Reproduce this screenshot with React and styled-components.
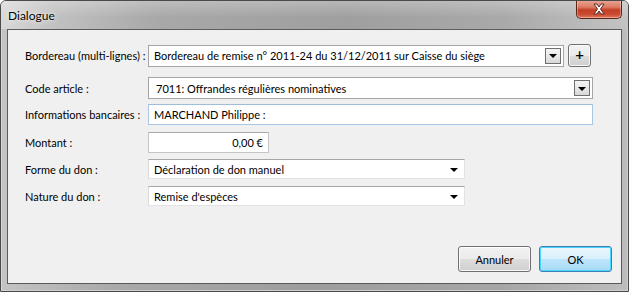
import React from "react";
import styled, { createGlobalStyle, css } from "styled-components";

const GlobalStyle = createGlobalStyle`
  html, body {
    margin: 0;
    padding: 0;
    background: #ffffff;
  }
  body {
    font-family: Lato, "Liberation Sans", sans-serif;
    font-size: 11px;
    color: #000;
  }
`;

const Window = styled.div`
  width: 629px;
  height: 292px;
  box-sizing: border-box;
  display: flex;
  flex-direction: column;
  border: 1px solid #4a4a4a;
  border-radius: 6px 6px 0 0;
  background: linear-gradient(90deg, #c4c4c4 0%, #a9a9a9 18%, #9d9d9d 50%, #a6a6a6 80%, #bdbdbd 100%);
  box-shadow: inset 1px 1px 0 #d8d8d8, inset -1px -1px 0 #cfcfcf;
  overflow: hidden;
`;

const TitleBar = styled.div`
  height: 28px;
  display: flex;
  align-items: flex-start;
  flex-shrink: 0;
  background:
    linear-gradient(180deg, rgba(255, 255, 255, 0.25) 0%, rgba(255, 255, 255, 0) 60%),
    linear-gradient(90deg, #d9d9d9 0%, #c2c2c2 8%, #a8a8a8 25%, #9f9f9f 55%, #a9a9a9 80%, #c3c3c3 100%);
`;

const Title = styled.div`
  flex: 1;
  padding: 7px 0 0 7px;
  font-size: 12px;
  color: #000;
  text-shadow: 0 0 6px rgba(255, 255, 255, 0.9), 0 0 2px rgba(255, 255, 255, 0.8);
`;

const CloseButton = styled.div`
  width: 46px;
  height: 19px;
  margin-right: 6px;
  margin-top: -1px;
  box-sizing: border-box;
  border: 1px solid #5a2418;
  border-top: none;
  border-radius: 0 0 5px 5px;
  display: flex;
  align-items: center;
  justify-content: center;
  background: linear-gradient(180deg, #e9a898 0%, #dc7a62 40%, #c23f26 55%, #c94a32 80%, #e27a5c 100%);
  box-shadow: inset 0 0 0 1px rgba(255, 255, 255, 0.35);
`;

const Client = styled.div`
  flex: 1;
  margin: 0 6px 7px 6px;
  border: 1px solid #5b5b5b;
  background: #f0f0f0;
  display: flex;
  flex-direction: column;
  padding: 14px 9px 11px 17px;
`;

const Row = styled.div`
  display: flex;
  align-items: center;
  height: ${(p) => p.$h}px;
  margin-top: ${(p) => p.$mt || 0}px;
`;

const Label = styled.div`
  width: 123px;
  flex-shrink: 0;
  white-space: nowrap;
  color: #000;
`;

const fieldBase = css`
  box-sizing: border-box;
  height: 100%;
  background: #fff;
  display: flex;
  align-items: center;
  white-space: nowrap;
  overflow: hidden;
`;

const ComboBox = styled.div`
  ${fieldBase}
  width: ${(p) => p.$w}px;
  border: 1px solid #a5a5a5;
  padding: 0 2px 0 ${(p) => p.$pl || 4}px;
`;

const ComboText = styled.div`
  flex: 1;
`;

const DropButton = styled.div`
  width: 16px;
  height: 16px;
  box-sizing: border-box;
  border: 1px solid #6f6f6f;
  background: linear-gradient(180deg, #f4f4f4 0%, #e8e8e8 50%, #d8d8d8 100%);
  display: flex;
  align-items: center;
  justify-content: center;
`;

const Arrow = styled.div`
  width: 0;
  height: 0;
  border-left: 4px solid transparent;
  border-right: 4px solid transparent;
  border-top: 4px solid #000;
  margin-top: 1px;
`;

const FlatCombo = styled.div`
  ${fieldBase}
  width: 317px;
  border-top: 1px solid #a6a6a6;
  border-left: 1px solid #dadada;
  border-right: 1px solid #e2e2e2;
  border-bottom: 1px solid #e2e2e2;
  padding: 0 6px 0 5px;
`;

const TextInput = styled.div`
  ${fieldBase}
  width: ${(p) => p.$w}px;
  border: 1px solid ${(p) => (p.$focus ? "#a9c7e3" : "#c6c6c6")};
  border-top-color: ${(p) => (p.$focus ? "#9fbcd8" : "#a9a9a9")};
  padding: 0 5px;
  justify-content: ${(p) => (p.$right ? "flex-end" : "flex-start")};
`;

const Button = styled.div`
  box-sizing: border-box;
  width: ${(p) => p.$w}px;
  height: ${(p) => p.$h}px;
  border: 1px solid ${(p) => (p.$default ? "#3c7fb1" : "#707070")};
  border-radius: 3px;
  display: flex;
  align-items: center;
  justify-content: center;
  color: #000;
  background: ${(p) =>
    p.$default
      ? "linear-gradient(180deg, #eaf6fd 0%, #d9f0fc 50%, #bee6fd 51%, #a7d9f5 100%)"
      : "linear-gradient(180deg, #f2f2f2 0%, #ebebeb 50%, #dddddd 51%, #cfcfcf 100%)"};
  box-shadow: inset 0 0 0 1px ${(p) => (p.$default ? "#48d5ff" : "rgba(255,255,255,0.8)")};
  margin-left: ${(p) => p.$ml || 0}px;
`;

const PlusButton = styled(Button)`
  font-size: 15px;
  font-weight: 600;
  line-height: 1;
  padding-bottom: 2px;
`;

const ButtonBar = styled.div`
  margin-top: auto;
  display: flex;
  justify-content: flex-end;
  height: 26px;
`;

const CloseIcon = () => (
  <svg width="14" height="12" viewBox="0 0 14 12">
    <path
      d="M2 1 L5 1 L7 4 L9 1 L12 1 L8.5 6 L12 11 L9 11 L7 8 L5 11 L2 11 L5.5 6 Z"
      fill="#ffffff"
      stroke="#5b2a20"
      strokeWidth="1"
      strokeLinejoin="round"
    />
  </svg>
);

const App = () => {
  return (
    <>
      <GlobalStyle />
      <Window>
        <TitleBar>
          <Title>Dialogue</Title>
          <CloseButton>
            <CloseIcon />
          </CloseButton>
        </TitleBar>
        <Client>
          <Row $h={23}>
            <Label>Bordereau (multi-lignes) :</Label>
            <ComboBox $w={416} $pl={5} style={{ height: 22 }}>
              <ComboText>Bordereau de remise n° 2011-24 du 31/12/2011 sur Caisse du siège</ComboText>
              <DropButton>
                <Arrow />
              </DropButton>
            </ComboBox>
            <PlusButton $w={23} $h={23} $ml={4}>+</PlusButton>
          </Row>
          <Row $h={22} $mt={10}>
            <Label>Code article :</Label>
            <ComboBox $w={445} $pl={7}>
              <ComboText>7011: Offrandes régulières nominatives</ComboText>
              <DropButton>
                <Arrow />
              </DropButton>
            </ComboBox>
          </Row>
          <Row $h={21} $mt={5}>
            <Label>Informations bancaires :</Label>
            <TextInput $w={445} $focus>
              MARCHAND Philippe :
            </TextInput>
          </Row>
          <Row $h={21} $mt={7}>
            <Label>Montant :</Label>
            <TextInput $w={121} $right>
              0,00 €
            </TextInput>
          </Row>
          <Row $h={20} $mt={6}>
            <Label>Forme du don :</Label>
            <FlatCombo>
              <ComboText>Déclaration de don manuel</ComboText>
              <Arrow />
            </FlatCombo>
          </Row>
          <Row $h={20} $mt={7}>
            <Label>Nature du don :</Label>
            <FlatCombo>
              <ComboText>Remise d'espèces</ComboText>
              <Arrow />
            </FlatCombo>
          </Row>
          <ButtonBar>
            <Button $w={73} $h={26}>Annuler</Button>
            <Button $w={73} $h={26} $ml={8} $default>
              OK
            </Button>
          </ButtonBar>
        </Client>
      </Window>
    </>
  );
};

export default App;
